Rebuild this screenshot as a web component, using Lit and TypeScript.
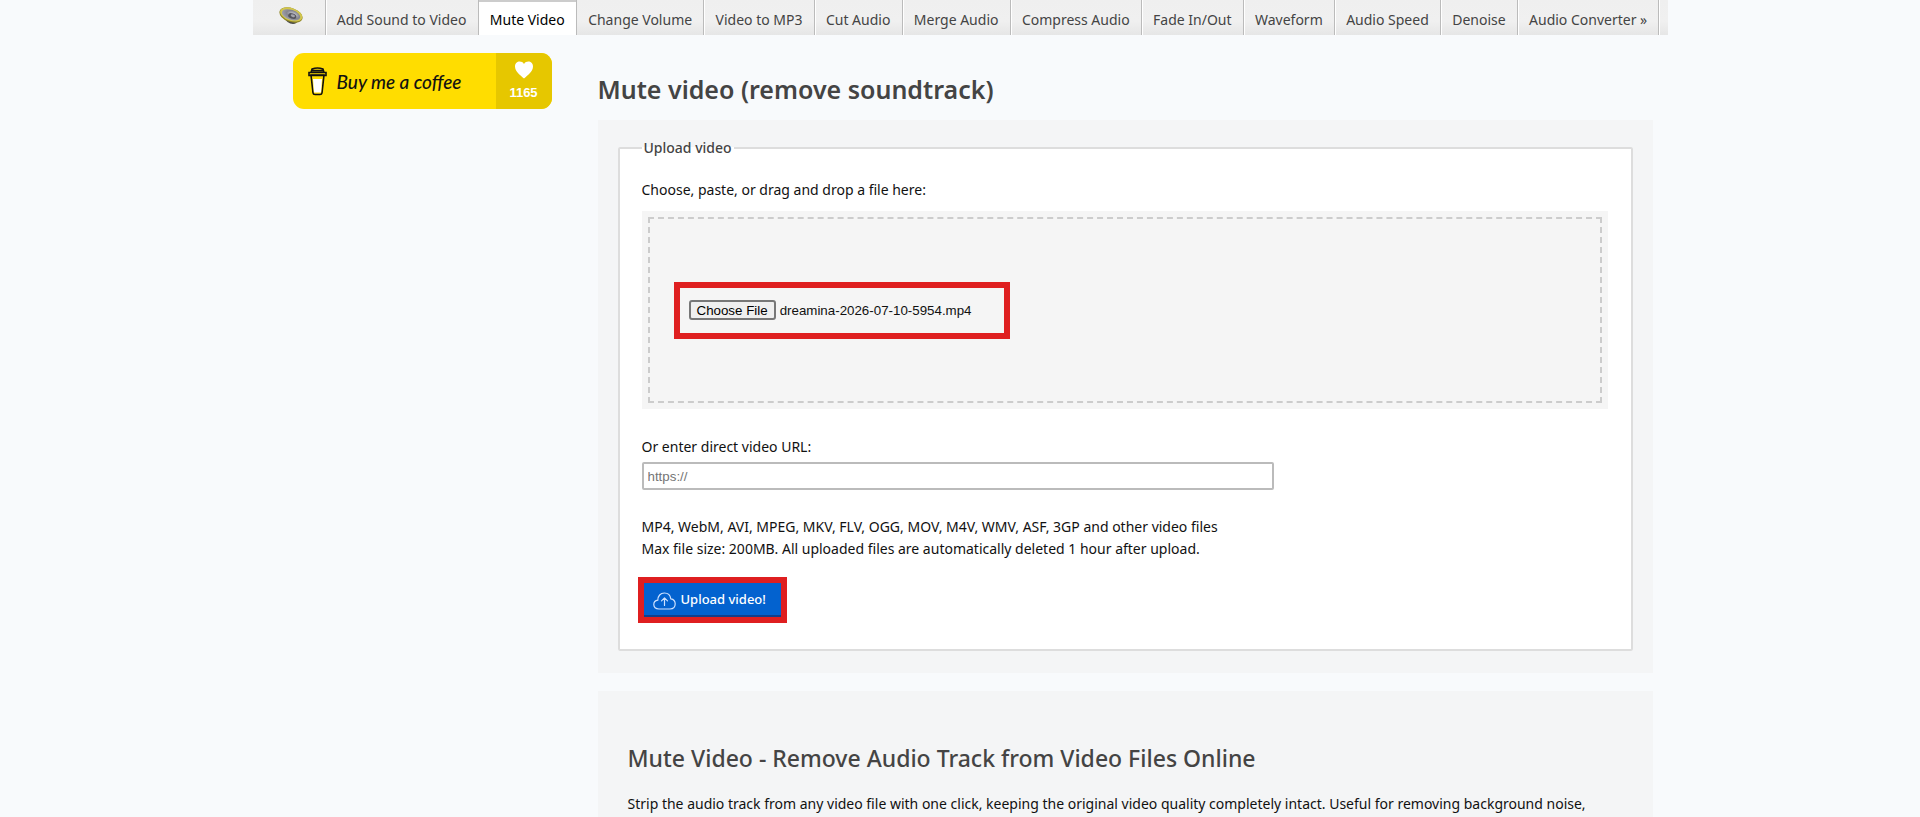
import { LitElement, html, css, svg } from "lit";
import { customElement, property, query } from "lit/decorators.js";
import { classMap } from "lit/directives/class-map.js";

const TOOLS = [
  "Add Sound to Video",
  "Mute Video",
  "Change Volume",
  "Video to MP3",
  "Cut Audio",
  "Merge Audio",
  "Compress Audio",
  "Fade In/Out",
  "Waveform",
  "Audio Speed",
  "Denoise",
  "Audio Converter »",
];

const speaker = svg`
  <defs>
    <radialGradient id="cone" cx="0.6" cy="0.4" r="0.7">
      <stop offset="0" stop-color="#d8d8de" />
      <stop offset="0.5" stop-color="#85858f" />
      <stop offset="1" stop-color="#a9a9b2" />
    </radialGradient>
  </defs>
  <path d="M5 11 Q8 18 14 18 Q18 18 19 14 Z" fill="#4c4c48" />
  <g transform="rotate(19 12 9)">
    <ellipse cx="12" cy="9" rx="12" ry="7" fill="#8f8526" />
    <ellipse cx="12" cy="8.400" rx="11.500" ry="6.400" fill="#d2c64c" />
    <ellipse cx="12" cy="8.800" rx="9.600" ry="5" fill="url(#cone)" />
    <ellipse cx="13.500" cy="9.600" rx="4.200" ry="2.600" fill="#55555d" />
    <ellipse cx="14" cy="9.200" rx="2.200" ry="1.300" fill="#a4a4ad" />
  </g>`;

@customElement("tool-tabs")
class ToolTabs extends LitElement {
  @property() current = "";

  static styles = css`
    :host {
      display: block;
    }
    .bar {
      display: flex;
      height: 35px;
      padding-right: 8px;
      background: linear-gradient(#efefef, #f0f0f0 60%, #e6e6e6);
    }
    .home {
      display: flex;
      box-sizing: border-box;
      width: 73px;
      padding: 6px 0 0 26px;
    }
    .tab {
      display: flex;
      flex: 1 0 auto;
      align-items: center;
      justify-content: center;
      padding: 4px 10px 0;
      color: #444;
      font-size: 14px;
      text-decoration: none;
      white-space: nowrap;
    }
    .home,
    .tab {
      border-right: 1px solid #bbb;
      box-shadow: 1px 0 #fff;
    }
    .current {
      background: #fff;
      color: #000;
      box-shadow: inset 0 2px #ccc;
    }
  `;

  render() {
    return html`<nav class="bar">
      <a class="home" href="#" aria-label="Home"
        ><svg width="25" height="20" viewBox="0 0 25 20">${speaker}</svg></a
      >
      ${TOOLS.map(
        (name) =>
          html`<a href="#" class=${classMap({ tab: true, current: name === this.current })}>${name}</a>`
      )}
    </nav>`;
  }
}

@customElement("coffee-button")
class CoffeeButton extends LitElement {
  static styles = css`
    :host {
      display: block;
    }
    .button {
      display: flex;
      height: 56px;
      border-radius: 11px;
      overflow: hidden;
      background: #fd0;
      color: #111;
      text-decoration: none;
    }
    .main {
      flex: 1;
      display: flex;
      align-items: center;
      gap: 10px;
      padding-left: 15px;
      font: italic 500 19px Lato, sans-serif;
      white-space: nowrap;
    }
    .count {
      display: flex;
      flex-direction: column;
      align-items: center;
      gap: 6px;
      width: 56px;
      padding-top: 8px;
      background: #e6c700;
      color: #fff;
      font: 700 13px/16px "Liberation Sans", Arial, sans-serif;
    }
  `;

  render() {
    return html`<a class="button" href="#">
      <span class="main">
        <svg width="19" height="29" viewBox="0 0 19 29" fill="none" stroke="#111" stroke-width="1.6">
          <path d="M3 8 L5 26 Q5.200 27.500 7 27.500 H12 Q13.800 27.500 14 26 L16 8 Z" />
          <path d="M5 12 H14 L13 25.500 H6 Z" fill="#fff" stroke="none" />
          <path d="M1 5.500 H18 V8.500 H1 Z M3 5.500 L4 2 Q9.500 0 15 2 L16 5.500 M4 3.600 H15" />
        </svg>
        Buy me a coffee
      </span>
      <span class="count">
        <svg width="18" height="18" viewBox="0 0 18 18">
          <path
            fill="#fff"
            d="M9 17.500 C5 14 0 10.500 0 5.500 C0 0 6.500 -1 9 3 C11.500 -1 18 0 18 5.500 C18 10.500 13 14 9 17.500 Z"
          />
        </svg>
        1165
      </span>
    </a>`;
  }
}

@customElement("upload-form")
class UploadForm extends LitElement {
  @property() filename = "";
  @query("#file") picker!: HTMLInputElement;

  static styles = css`
    :host {
      display: block;
    }
    .group {
      margin: 0;
      min-width: 0;
      padding: 0 23px 26px 22px;
      border: 2px solid #ddd;
      border-radius: 2px;
      background: #fff;
    }
    .legend {
      padding: 0 2px;
      color: #444;
      font-weight: 500;
      line-height: 20px;
    }
    .label {
      display: block;
      line-height: 22px;
    }
    .first {
      padding-top: 21px;
    }
    .drop {
      display: flex;
      align-items: center;
      box-sizing: border-box;
      height: 198px;
      margin: 10px 0 27px;
      padding-left: 32px;
      background: #f5f5f5;
      outline: 2px dashed #ccc;
      outline-offset: -8px;
    }
    .mark {
      border: 6px solid #df1f20;
    }
    .picker {
      display: flex;
      align-items: center;
      box-sizing: border-box;
      width: 336px;
      height: 57px;
      padding-left: 9px;
    }
    .file {
      width: 300px;
      font-family: "Liberation Sans", Arial, sans-serif;
      color: #111;
    }
    .file::file-selector-button {
      height: 20px;
      padding: 0 6px;
      border: 2px solid #777;
      border-radius: 3px;
      background: #efefef;
    }
    .url {
      display: block;
      box-sizing: border-box;
      width: 632px;
      max-width: 100%;
      height: 28px;
      margin-top: 4px;
      padding: 0 4px;
      border: 2px solid #bbb;
      border-radius: 2px;
      background: #fff;
      font-family: "Liberation Sans", Arial, sans-serif;
    }
    .note {
      margin: 26px 0 17px;
      line-height: 22px;
    }
    .submit {
      display: inline-block;
      margin-left: -4px;
    }
    .send {
      display: flex;
      align-items: center;
      gap: 5px;
      height: 34px;
      padding: 0 15px 0 9px;
      border: 0;
      border-bottom: 2px solid #123f8c;
      background: #0362cf;
      color: #fff;
      font: 500 13px "Noto Sans", "Open Sans", sans-serif;
    }
    .cloud {
      position: relative;
      top: 2px;
    }
  `;

  firstUpdated() {
    const transfer = new DataTransfer();
    transfer.items.add(new File([], this.filename));
    this.picker.files = transfer.files;
  }

  render() {
    return html`<form>
      <fieldset class="group">
        <legend class="legend">Upload video</legend>
        <label class="label first" for="file">Choose, paste, or drag and drop a file here:</label>
        <div class="drop">
          <div class="picker mark"><input class="file" id="file" type="file" /></div>
        </div>
        <label class="label" for="url">Or enter direct video URL:</label>
        <input class="url" id="url" type="url" placeholder="https://" />
        <p class="note">
          MP4, WebM, AVI, MPEG, MKV, FLV, OGG, MOV, M4V, WMV, ASF, 3GP and other video files<br />
          Max file size: 200MB. All uploaded files are automatically deleted 1 hour after upload.
        </p>
        <div class="submit mark">
          <button class="send" type="button">
            <svg class="cloud" width="23" height="18" viewBox="0 0 23 18" fill="none" stroke="#cfe2ff" stroke-width="1.200" stroke-linecap="round" stroke-linejoin="round">
              <path d="M6 17 C2.500 17 0.800 15 0.800 12.600 C0.800 10.200 2.500 8.500 4.800 8.200 C4.800 4 7.500 1 11.300 1 C14.800 1 17.300 3.300 17.800 6.800 C20.600 7.200 22.200 9.200 22.200 11.800 C22.200 15 20 17 17 17 Z" />
              <path d="M11.500 13.500 V6 M8.500 8.800 L11.500 5.800 L14.500 8.800" />
            </svg>
            Upload video!
          </button>
        </div>
      </fieldset>
    </form>`;
  }
}

@customElement("app-root")
class AppRoot extends LitElement {
  static styles = css`
    :host {
      display: block;
      height: 100vh;
      overflow: hidden;
      background: #f8fafc;
      color: #111;
      font: 14px "Noto Sans", "Open Sans", sans-serif;
    }
    .page {
      max-width: 1415px;
      margin: 0 auto;
    }
    .columns {
      display: grid;
      grid-template-columns: 259px minmax(0, 1fr);
      gap: 46px;
      padding: 18px 15px 0 40px;
    }
    .title,
    .heading {
      margin: 0;
      color: #444;
    }
    .title {
      padding: 18px 0 13px;
      font-size: 25px;
      font-weight: 600;
      line-height: 36px;
    }
    .panel {
      margin-bottom: 18px;
      padding: 18px 20px 22px;
      background: #f4f5f6;
    }
    .about {
      padding: 51px 30px;
    }
    .heading {
      font-size: 23px;
      font-weight: 500;
      line-height: 32px;
    }
    .text {
      margin: 19px 0;
      line-height: 22px;
    }
  `;

  render() {
    return html`<div class="page">
      <tool-tabs current="Mute Video"></tool-tabs>
      <div class="columns">
        <aside><coffee-button></coffee-button></aside>
        <main>
          <h1 class="title">Mute video (remove soundtrack)</h1>
          <section class="panel">
            <upload-form filename="dreamina-2026-07-10-5954.mp4"></upload-form>
          </section>
          <section class="panel about">
            <h2 class="heading">Mute Video - Remove Audio Track from Video Files Online</h2>
            <p class="text">
              Strip the audio track from any video file with one click, keeping the original video quality
              completely intact. Useful for removing background noise,
            </p>
          </section>
        </main>
      </div>
    </div>`;
  }
}
